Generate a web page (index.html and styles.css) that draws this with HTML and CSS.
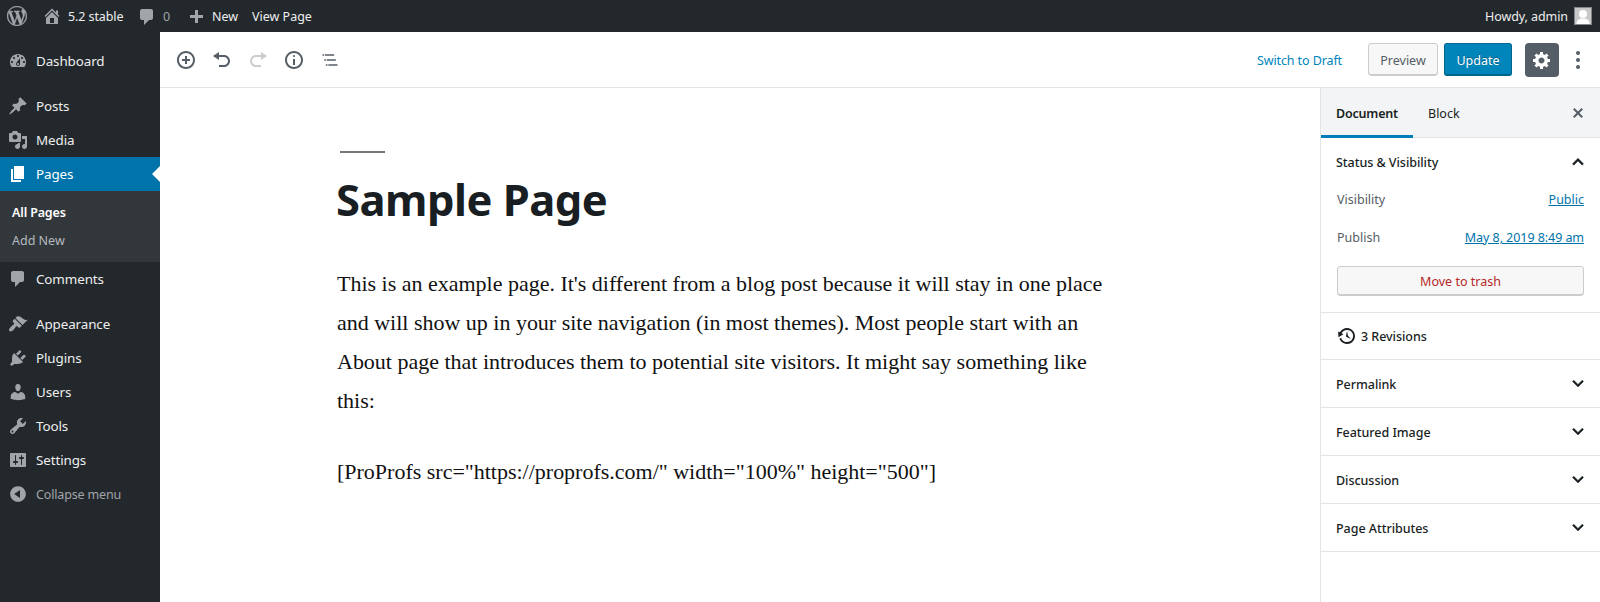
FILE: index.html
```html
<!DOCTYPE html>
<html lang="en">
<head>
<meta charset="utf-8">
<title>Edit Page</title>
<link rel="stylesheet" href="styles.css">
</head>
<body>
<header class="adminbar">
  <svg class="icon bar-logo" viewBox="0 0 20 20"><path d="M20 10c0-5.51-4.49-10-10-10C4.48 0 0 4.49 0 10c0 5.52 4.48 10 10 10 5.51 0 10-4.48 10-10zM7.78 15.37L4.37 6.22c.55-.02 1.17-.08 1.17-.08.5-.06.44-1.13-.06-1.11 0 0-1.45.11-2.37.11-.18 0-.37 0-.58-.01C4.12 2.69 6.87 1.11 10 1.11c2.33 0 4.45.87 6.05 2.34-.68-.11-1.65.39-1.65 1.58 0 .74.45 1.36.9 2.1.35.61.55 1.36.55 2.46 0 1.49-1.4 5-1.4 5l-3.03-8.37c.54-.02.82-.17.82-.17.5-.05.44-1.25-.06-1.22 0 0-1.44.12-2.38.12-.87 0-2.33-.12-2.33-.12-.5-.03-.56 1.2-.06 1.22l.92.08 1.26 3.41zM17.41 10c.24-.64.74-1.87.43-4.25.7 1.29 1.05 2.71 1.05 4.25 0 3.29-1.73 6.24-4.4 7.78.97-2.59 1.94-5.2 2.92-7.78zM6.1 18.09C3.12 16.65 1.11 13.53 1.11 10c0-1.3.23-2.48.72-3.59C3.25 10.3 4.67 14.2 6.1 18.09zm4.03-6.63l2.58 6.98c-.86.29-1.76.45-2.71.45-.79 0-1.57-.11-2.29-.33.81-2.38 1.62-4.74 2.42-7.1z"/></svg>
  <a class="bar-item bar-site"><svg class="icon" viewBox="0 0 20 20"><path d="M16 8.5l1.53 1.53-1.06 1.06L10 4.6l-6.47 6.49-1.06-1.06L10 2.5l4 4v-2h2v4zm-6-2.46l6 5.99V18H4v-5.97zM12 17v-5H8v5h4z"/></svg><span>5.2 stable</span></a>
  <a class="bar-item bar-comments"><svg class="icon" viewBox="0 0 20 20"><path d="M5 2h9c1.1 0 2 .9 2 2v7c0 1.1-.9 2-2 2h-2l-5 5v-5H5c-1.1 0-2-.9-2-2V4c0-1.1.9-2 2-2z"/></svg><span>0</span></a>
  <a class="bar-item bar-new"><svg class="icon" viewBox="0 0 20 20"><path d="M17 7v3h-5v5H9v-5H4V7h5V2h3v5z"/></svg><span>New</span></a>
  <a class="bar-item bar-view"><span>View Page</span></a>
  <a class="bar-item bar-user"><span>Howdy, admin</span><svg class="avatar" viewBox="0 0 18 18"><rect width="18" height="18" fill="#82878c"/><rect x="1" y="1" width="16" height="16" fill="#c8c8c8"/><circle cx="9" cy="7" r="4" fill="#fff"/><path d="M2.5 17c0-4 2.500-5.500 6.500-5.500s6.500 1.500 6.500 5.500z" fill="#fff"/></svg></a>
</header>
<div class="shell">
  <nav class="menu">
    <a class="menu-item"><svg class="icon" viewBox="0 0 20 20"><path d="M3.76 16h12.48c1.1-1.37 1.76-3.11 1.76-5 0-4.42-3.58-8-8-8s-8 3.580-8 8c0 1.890.66 3.630 1.760 5zM10 4c.55 0 1 .45 1 1s-.45 1-1 1-1-.45-1-1 .45-1 1-1zM6 6c.55 0 1 .45 1 1s-.45 1-1 1-1-.45-1-1 .45-1 1-1zm8 0c.55 0 1 .45 1 1s-.45 1-1 1-1-.45-1-1 .45-1 1-1zm-5.370 5.550L12 7v6c0 1.100-.9 2-2 2s-2-.9-2-2c0-.57.24-1.080.63-1.450zM4 10c.55 0 1 .45 1 1s-.45 1-1 1-1-.45-1-1 .45-1 1-1zm12 0c.55 0 1 .45 1 1s-.45 1-1 1-1-.45-1-1 .45-1 1-1zm-5 3c0-.55-.45-1-1-1s-1 .45-1 1 .45 1 1 1 1-.45 1-1z"/></svg><span>Dashboard</span></a>
    <div class="menu-gap"></div>
    <a class="menu-item"><svg class="icon" viewBox="0 0 20 20"><path d="M10.44 3.020l1.820-1.820 6.360 6.350-1.830 1.820c-1.050-.68-2.480-.57-3.410.36l-.75.75c-.92.93-1.040 2.350-.35 3.410l-1.830 1.820-2.410-2.410-2.800 2.790c-.42.42-3.380 2.710-3.800 2.290s1.860-3.390 2.280-3.810l2.790-2.790L4.100 9.360l1.830-1.820c1.050.69 2.480.57 3.400-.36l.75-.75c.93-.92 1.050-2.350.36-3.410z"/></svg><span>Posts</span></a>
    <a class="menu-item"><svg class="icon" viewBox="0 0 20 20"><path d="M13 11V4c0-.55-.45-1-1-1h-1.670L9 1H5L3.670 3H2c-.55 0-1 .45-1 1v7c0 .55.45 1 1 1h10c.55 0 1-.45 1-1zM7 4.500c1.380 0 2.500 1.120 2.500 2.500S8.380 9.500 7 9.500 4.500 8.380 4.500 7 5.620 4.500 7 4.500zM14 6h5v10.500c0 1.380-1.120 2.500-2.500 2.500S14 17.880 14 16.500s1.120-2.500 2.500-2.500c.17 0 .34.020.5.050V9h-3V6zm-4 8.050V13h2v3.500c0 1.380-1.120 2.500-2.500 2.500S7 17.880 7 16.500 8.120 14 9.500 14c.17 0 .34.020.5.050z"/></svg><span>Media</span></a>
    <a class="menu-item current"><svg class="icon" viewBox="0 0 20 20"><path d="M6 15V2h10v13H6zm-1 1h8v2H3V5h2v11z"/></svg><span>Pages</span></a>
    <div class="submenu"><a class="sub-current">All Pages</a><a>Add New</a></div>
    <a class="menu-item"><svg class="icon" viewBox="0 0 20 20"><path d="M5 2h9c1.1 0 2 .9 2 2v7c0 1.1-.9 2-2 2h-2l-5 5v-5H5c-1.1 0-2-.9-2-2V4c0-1.1.9-2 2-2z"/></svg><span>Comments</span></a>
    <div class="menu-gap"></div>
    <a class="menu-item"><svg class="icon" viewBox="0 0 20 20"><path d="M14.480 11.060L7.410 3.990l1.500-1.500c.5-.56 2.300-.47 3.510.32 1.210.8 1.430 1.280 2.910 2.100 1.180.64 2.450 1.260 4.450.85zm-.71.71L6.700 4.700 4.930 6.470c-.39.39-.39 1.020 0 1.410l1.060 1.060c.39.39.39 1.030 0 1.420-.6.6-1.430 1.110-2.210 1.690-.35.26-.7.53-1.010.84C1.430 14.230.4 16.080 1.400 17.070c.99 1 2.840-.03 4.180-1.360.31-.31.58-.66.85-1.020.57-.78 1.080-1.610 1.690-2.210.39-.39 1.020-.39 1.410 0l1.060 1.060c.39.39 1.020.39 1.410 0z"/></svg><span>Appearance</span></a>
    <a class="menu-item"><svg class="icon" viewBox="0 0 20 20"><path d="M13.110 4.360L9.870 7.600 8 5.730l3.240-3.240c.35-.34 1.050-.2 1.560.32.52.51.66 1.210.31 1.550zm-8 1.770l.91-1.120 9.010 9.010-1.190.84c-.71.71-2.630 1.160-3.820 1.160H6.140L4.900 17.260c-.59.59-1.540.59-2.120 0-.59-.58-.59-1.530 0-2.120l1.240-1.240v-3.880c0-1.130.4-3.190 1.090-3.890zm7.260 3.970l3.240-3.240c.34-.35 1.040-.21 1.550.31.52.51.66 1.210.31 1.550l-3.240 3.250z"/></svg><span>Plugins</span></a>
    <a class="menu-item"><svg class="icon" viewBox="0 0 20 20"><path d="M10 9.250c-2.270 0-2.730-3.440-2.730-3.440C7 4.020 7.820 2 9.970 2c2.160 0 2.980 2.020 2.710 3.810 0 0-.41 3.440-2.680 3.440zm0 2.570L12.720 10c2.390 0 4.520 2.330 4.520 4.530v2.490s-3.650 1.130-7.240 1.130c-3.650 0-7.240-1.130-7.240-1.130v-2.490c0-2.250 1.940-4.480 4.470-4.480z"/></svg><span>Users</span></a>
    <a class="menu-item"><svg class="icon" viewBox="0 0 20 20"><path d="M16.680 9.770c-1.340 1.340-3.300 1.670-4.950.99l-5.410 6.520c-.99.99-2.590.99-3.580 0s-.99-2.590 0-3.570l6.520-5.420c-.68-1.650-.35-3.610.99-4.950 1.280-1.280 3.120-1.620 4.720-1.060l-2.890 2.890 2.820 2.820 2.860-2.870c.53 1.580.18 3.390-1.080 4.650zM3.810 16.210c.4.39 1.040.39 1.430 0 .4-.4.4-1.040 0-1.430-.39-.4-1.030-.4-1.430 0-.39.39-.39 1.030 0 1.430z"/></svg><span>Tools</span></a>
    <a class="menu-item"><svg class="icon" viewBox="0 0 20 20"><path d="M18 16V4c0-.55-.45-1-1-1H3c-.55 0-1 .45-1 1v12c0 .55.45 1 1 1h14c.55 0 1-.45 1-1zM8 11h1c.55 0 1 .45 1 1s-.45 1-1 1H8v1.500c0 .28-.22.5-.5.5s-.5-.22-.5-.5V13H6c-.55 0-1-.45-1-1s.45-1 1-1h1V5.500c0-.28.22-.5.5-.5s.5.22.5.5V11zm5-2h-1c-.55 0-1-.45-1-1s.45-1 1-1h1V5.500c0-.28.22-.5.5-.5s.5.22.5.5V7h1c.55 0 1 .45 1 1s-.45 1-1 1h-1v5.500c0 .28-.22.5-.5.5s-.5-.22-.5-.5V9z"/></svg><span>Settings</span></a>
    <a class="menu-item collapse"><svg class="icon" viewBox="0 0 20 20"><path d="M10 2.160c4.330 0 7.840 3.510 7.840 7.840s-3.510 7.840-7.840 7.840S2.160 14.330 2.160 10 5.670 2.160 10 2.160zm2 11.720V6.120L6.180 9.970z"/></svg><span>Collapse menu</span></a>
  </nav>
  <main class="editor">
    <div class="toolbar">
      <button class="tool"><svg class="icon" viewBox="0 0 20 20"><path d="M10 1c-5 0-9 4-9 9s4 9 9 9 9-4 9-9-4-9-9-9zm0 16c-3.900 0-7-3.100-7-7s3.100-7 7-7 7 3.100 7 7-3.100 7-7 7zm1-11H9v3H6v2h3v3h2v-3h3V9h-3V6z"/></svg></button>
      <button class="tool"><svg class="icon" viewBox="0 0 20 20"><path d="M12 5H7V2L1 6l6 4V7h5c2.200 0 4 1.800 4 4s-1.800 4-4 4H7v2h5c3.300 0 6-2.700 6-6s-2.700-6-6-6"/></svg></button>
      <button class="tool disabled"><svg class="icon" viewBox="0 0 20 20"><path d="M8 5h5V2l6 4-6 4V7H8c-2.200 0-4 1.800-4 4s1.800 4 4 4h5v2H8c-3.300 0-6-2.700-6-6s2.700-6 6-6"/></svg></button>
      <button class="tool"><svg class="icon" viewBox="0 0 20 20"><path d="M9 15h2V9H9v6zm1-10c-.5 0-1 .5-1 1s.5 1 1 1 1-.5 1-1-.5-1-1-1zm0-4c-5 0-9 4-9 9s4 9 9 9 9-4 9-9-4-9-9-9zm0 16c-3.900 0-7-3.100-7-7s3.100-7 7-7 7 3.100 7 7-3.100 7-7 7z"/></svg></button>
      <button class="tool"><svg class="icon" viewBox="0 0 24 24"><path d="M5 5H3v2h2V5zm3 8h11v-2H8v2zm9-8H6v2h11V5zM7 11H5v2h2v-2zm0 8h2v-2H7v2zm3-2v2h11v-2H10z"/></svg></button>
      <div class="actions">
        <a class="draft">Switch to Draft</a>
        <button class="btn preview">Preview</button>
        <button class="btn update">Update</button>
        <button class="gear"><svg class="icon" viewBox="0 0 20 20"><path d="M18 12h-2.180c-.17.7-.44 1.350-.81 1.930l1.540 1.540-2.100 2.100-1.540-1.540c-.58.36-1.230.63-1.910.79V19H8v-2.180c-.68-.16-1.330-.43-1.910-.79l-1.540 1.540-2.120-2.120 1.540-1.540c-.36-.58-.63-1.230-.79-1.910H1V9.030h2.170c.16-.7.44-1.350.8-1.940L2.430 5.550l2.100-2.100 1.540 1.540c.58-.37 1.240-.64 1.930-.81V2h3v2.180c.68.16 1.330.43 1.910.79l1.540-1.540 2.120 2.120-1.540 1.540c.36.59.64 1.240.8 1.940H18V12zm-8.500 1.500c1.660 0 3-1.340 3-3s-1.340-3-3-3-3 1.340-3 3 1.340 3 3 3z"/></svg></button>
        <svg class="icon dots" viewBox="0 0 20 20"><circle cx="10" cy="3" r="2"/><circle cx="10" cy="10" r="2"/><circle cx="10" cy="17" r="2"/></svg>
      </div>
    </div>
    <div class="work">
      <article class="canvas">
        <div class="rule"></div>
        <h1 class="title">Sample Page</h1>
        <p class="para">This is an example page. It's different from a blog post because it will stay in one place<br>and will show up in your site navigation (in most themes). Most people start with an<br>About page that introduces them to potential site visitors. It might say something like<br>this:</p>
        <p class="para">[ProProfs src="https://proprofs.com/" width="100%" height="500"]</p>
      </article>
      <aside class="inspector">
        <div class="tabs">
          <button class="tab active">Document</button>
          <button class="tab">Block</button>
          <svg class="icon close" viewBox="0 0 20 20"><path d="M14.950 6.460L11.410 10l3.540 3.540-1.410 1.410L10 11.420l-3.530 3.530-1.420-1.420L8.580 10 5.050 6.470l1.420-1.420L10 8.580l3.540-3.530z"/></svg>
        </div>
        <section class="status">
          <div class="panel-head"><span>Status &amp; Visibility</span><svg class="chev" viewBox="0 0 24 24"><path d="M12 8l-6 6 1.410 1.410L12 10.830l4.590 4.580L18 14z"/></svg></div>
          <div class="row"><span>Visibility</span><a>Public</a></div>
          <div class="row"><span>Publish</span><a class="date">May 8, 2019 8:49 am</a></div>
          <button class="btn trash">Move to trash</button>
        </section>
        <section class="revisions"><svg class="icon" viewBox="0 0 20 20"><path d="M13.650 2.880c3.930 2.010 5.480 6.840 3.470 10.770s-6.830 5.480-10.770 3.470c-1.870-.96-3.200-2.560-3.860-4.400l1.640-1.030c.45 1.570 1.520 2.950 3.080 3.760 3.010 1.540 6.690.35 8.230-2.660 1.550-3.010.36-6.690-2.650-8.240C9.780 3.010 6.100 4.200 4.560 7.210l1.880.97-4.950 3.080-.39-5.820 1.780.91C4.900 2.400 9.750.89 13.650 2.880zm-4.360 7.830C9.110 10.530 9 10.280 9 10c0-.07.03-.12.040-.19h-.01L10 5l.97 4.810L14 13l-4.500-2.120.02-.02c-.08-.04-.16-.09-.23-.15z"/></svg><span>3 Revisions</span></section>
        <section class="panel"><span>Permalink</span><svg class="chev" viewBox="0 0 24 24"><path d="M7.410 7.840L12 12.420l4.590-4.580L18 9.250l-6 6-6-6z"/></svg></section>
        <section class="panel"><span>Featured Image</span><svg class="chev" viewBox="0 0 24 24"><path d="M7.410 7.840L12 12.420l4.590-4.580L18 9.250l-6 6-6-6z"/></svg></section>
        <section class="panel"><span>Discussion</span><svg class="chev" viewBox="0 0 24 24"><path d="M7.410 7.840L12 12.420l4.590-4.580L18 9.250l-6 6-6-6z"/></svg></section>
        <section class="panel"><span>Page Attributes</span><svg class="chev" viewBox="0 0 24 24"><path d="M7.410 7.840L12 12.420l4.590-4.580L18 9.250l-6 6-6-6z"/></svg></section>
      </aside>
    </div>
  </main>
</div>
</body>
</html>
```
FILE: styles.css
```css
* { box-sizing: border-box; }
body {
  margin: 0;
  height: 602px;
  overflow: hidden;
  display: flex;
  flex-direction: column;
  background: #fff;
  color: #191e23;
  font: 12.5px/18px "Noto Sans", "Open Sans", sans-serif;
}
button { font: inherit; letter-spacing: inherit; margin: 0; padding: 0; border: 0; background: none; color: inherit; }
.icon { width: 20px; height: 20px; flex: none; fill: currentColor; display: block; }

/* Admin bar */
.adminbar { height: 32px; flex: none; display: flex; align-items: center; background: #23282d; color: #eee; padding: 0 8px 0 7px; }
.adminbar .icon { color: #a0a5aa; }
.bar-logo { stroke: currentColor; stroke-width: .25; }
.bar-item { display: flex; align-items: center; white-space: nowrap; }
.bar-item span { padding-top: 2px; }
.bar-site { margin-left: 15px; gap: 6px; width: 95px; letter-spacing: -.1px; }
.bar-comments { gap: 6px; width: 49px; color: #a0a5aa; }
.bar-comments .icon { margin-top: 1px; }
.bar-new { gap: 6px; width: 66px; }
.bar-new .icon { margin-top: 3px; }
.bar-user { margin-left: auto; gap: 6px; letter-spacing: -.08px; }
.avatar { width: 18px; height: 18px; display: block; }

.shell { flex: 1; display: flex; min-height: 0; }

/* Left menu */
.menu { width: 160px; flex: none; background: #23282d; color: #eee; padding-top: 12px; font-size: 13.4px; letter-spacing: -.1px; }
.menu-item { height: 34px; display: flex; align-items: center; gap: 8px; padding-left: 8px; white-space: nowrap; }
.menu-item .icon { color: #a0a5aa; }
.menu-gap { height: 11px; }
.menu-item.current { background: #0073aa; color: #fff; position: relative; }
.menu-item.current .icon { color: #fff; }
.menu-item.current::after { content: ""; position: absolute; right: 0; top: 9px; border: 8px solid transparent; border-right-color: #fff; border-left: 0; }
.submenu { height: 71px; background: #32373c; padding: 8px 12px 0; display: flex; flex-direction: column; font-size: 12.5px; letter-spacing: 0; color: #b4b9be; }
.submenu a { height: 28px; line-height: 28px; }
.submenu .sub-current { color: #fff; font-weight: 600; letter-spacing: -.15px; }
.collapse { color: #a0a5aa; font-size: 12.5px; letter-spacing: -.15px; }
.collapse span { padding-top: 2px; }

/* Editor */
.editor { flex: 1; display: flex; flex-direction: column; min-width: 0; }
.toolbar { height: 56px; flex: none; display: flex; align-items: center; border-bottom: 1px solid #e2e4e7; padding: 0 12px 0 8px; color: #555d66; }
.tool { width: 36px; height: 36px; padding: 8px; }
.tool.disabled { opacity: .3; }
.actions { margin-left: auto; display: flex; align-items: center; }
.draft { color: #0085ba; margin-right: 26px; padding-top: 2px; letter-spacing: -.1px; }
.btn { height: 33px; border: 1px solid #ccc; border-radius: 3px; background: #f7f7f7; box-shadow: inset 0 -1px 0 #ccc; padding-top: 2px; }
.preview { width: 70px; color: #555d66; }
.update { width: 68px; margin-left: 6px; background: #0085ba; border-color: #006a95 #00648c #00648c; box-shadow: inset 0 -1px 0 #00648c; color: #fff; text-shadow: 0 -1px 1px #005d82; }
.gear { width: 34px; height: 34px; margin-left: 13px; padding: 7px; border-radius: 4px; background: #555d66; color: #fff; }
.dots { margin-left: 9px; }

.work { flex: 1; display: flex; min-height: 0; }
.canvas { flex: 1; padding: 63px 0 0 177px; }
.rule { width: 45px; height: 2px; margin-left: 3px; background: #767676; }
.title { margin: 14px 0 33px -1px; font: 700 43.5px/64px "Noto Sans", "Open Sans", sans-serif; letter-spacing: -.5px; }
.para { margin: 0 0 32px; font: 22px/39px "Liberation Serif", "Times New Roman", serif; letter-spacing: -.008px; white-space: nowrap; color: #111; }

/* Inspector */
.inspector { width: 280px; flex: none; border-left: 1px solid #e2e4e7; }
.tabs { height: 50px; display: flex; align-items: center; background: #f3f4f5; border-bottom: 1px solid #e2e4e7; }
.tab { height: 50px; padding: 2px 15px 0; }
.tab.active { width: 92px; border-bottom: 3px solid #007cba; padding-top: 5px; font-weight: 600; letter-spacing: -.2px; }
.close { margin: 0 12px 0 auto; color: #555d66; }
.status { height: 175px; border-bottom: 1px solid #e2e4e7; padding: 0 16px; }
.panel-head span, .revisions span, .panel span { padding-top: 2px; letter-spacing: -.04px; }
.panel-head { height: 48px; margin: 0 -1px; display: flex; align-items: center; justify-content: space-between; font-weight: 500; }
.chev { width: 22px; height: 22px; margin-right: -4px; fill: #191e23; stroke: #191e23; stroke-width: .5; display: block; }
.panel .chev { margin-top: 1px; }
.row { height: 38px; margin-top: -5px; margin-bottom: 5px; display: flex; align-items: center; justify-content: space-between; color: #555d66; }
.row a { color: #0073aa; text-decoration: underline; }
.date { letter-spacing: -.06px; }
.trash { width: 100%; height: 30px; margin-top: 9px; color: #b52727; display: block; }
.revisions { height: 47px; border-bottom: 1px solid #e2e4e7; display: flex; align-items: center; gap: 4px; padding-left: 16px; font-weight: 500; }
.panel { height: 48px; border-bottom: 1px solid #e2e4e7; display: flex; align-items: center; justify-content: space-between; padding: 0 15px; font-weight: 500; }
```
